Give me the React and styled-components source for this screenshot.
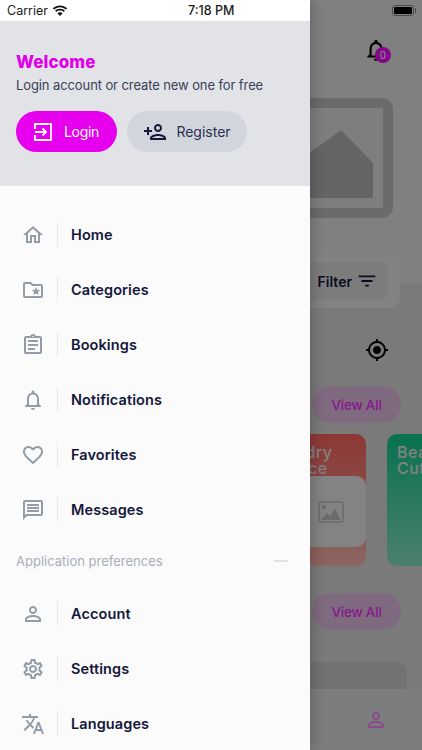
import React from "react";
import styled, { createGlobalStyle } from "styled-components";
import {
  MdOutlineHome, MdOutlineFolderSpecial, MdOutlineAssignment, MdOutlineNotifications,
  MdFavoriteBorder, MdOutlineMessage, MdPersonOutline, MdOutlineSettings, MdOutlineTranslate,
  MdPersonAddAlt, MdFilterList, MdMyLocation,
} from "react-icons/md";

const Global = createGlobalStyle`
  html, body { margin: 0; padding: 0; background: #fff; }
  * { box-sizing: border-box; }
  body { font-family: Inter, "Noto Sans", sans-serif; }
`;

const Phone = styled.div`
  position: relative; width: 422px; height: 750px; overflow: hidden; background: #dedede;
`;
const Screen = styled.div`
  width: 422px; height: 750px; display: flex; flex-direction: column; overflow: hidden;
`;
const HeroBlock = styled.div`
  height: 283px; flex: none; background: #e9e9e9; display: flex; flex-direction: column;
`;
const TopBar = styled.div`
  height: 21px; flex: none; display: flex; justify-content: flex-end; align-items: center; padding-right: 8px;
`;
const Battery = styled.div`
  position: relative; width: 22px; height: 11px; border: 1px solid #888; border-radius: 3px; padding: 1px; display: flex;
  &::before { content: ""; flex: 1; background: #000; border-radius: 1px; }
  &::after { content: ""; position: absolute; right: -3px; top: 2px; width: 1px; height: 5px; background: #888; }
`;
const Header = styled.div`
  height: 77px; flex: none; display: flex; justify-content: flex-end; padding: 16px 33px 0 0;
`;
const BellWrap = styled.div`
  position: relative; width: 26px; height: 26px; color: #000;
`;
const Badge = styled.span`
  position: absolute; left: 12px; top: 10px; width: 16px; height: 16px; border-radius: 50%;
  background: #f00eff; color: #fff; font-size: 10px; line-height: 16px; text-align: center;
`;
const Hero = styled.div`
  display: flex; justify-content: flex-end; padding-right: 29px;
`;
const FilterOuter = styled.div`
  position: relative; height: 53px; width: 392px; flex: none; margin: -28px 0 0 8px; background: #ededed; border-radius: 10px; padding: 7px 12px 8px;
  display: flex;
`;
const FilterInner = styled.div`
  flex: 1; border-radius: 8px; background: #e2e2e2; display: flex; justify-content: flex-end; align-items: center; padding-right: 10px; gap: 4px;
`;
const FilterText = styled.span`
  font-size: 14px; font-weight: 600; color: #14173a;
`;
const LocationRow = styled.div`
  height: 78px; flex: none; display: flex; justify-content: flex-end; align-items: flex-start; padding: 30px 33px 0 0; color: #000;
`;
const ViewRow = styled.div`
  height: 37px; flex: none; display: flex; justify-content: flex-end; padding-right: 21px;
`;
const ViewAll = styled.div`
  width: 89px; height: 37px; border-radius: 19px; background: #e7c1e8; color: #f22fff; font-size: 13.5px; font-weight: 500; letter-spacing: -.2px;
  display: flex; align-items: center; justify-content: center;
`;
const Cards = styled.div`
  height: 132px; flex: none; margin-top: 11px; display: flex; gap: 21px; padding-left: 256px; width: 700px;
`;
const Card = styled.div`
  position: relative; width: ${p => p.$w}px; height: 132px; border-radius: 10px; overflow: hidden; flex: none;
  background: linear-gradient(180deg, ${p => p.$from}, ${p => p.$to});
  padding: 10px; color: #ececec; font-size: 16px; font-weight: 500; line-height: 16px; letter-spacing: .5px;
`;
const CardThumb = styled.div`
  position: absolute; right: ${p => p.$right}px; top: ${p => p.$top}px; width: 100px; height: ${p => p.$h}px; border-radius: 10px; background: #eeeef0;
  display: flex; align-items: center; justify-content: flex-end; padding-right: 22px; color: #c4c4c4;
`;
const ListCard = styled.div`
  height: 27px; flex: none; margin: 32px 15px 0 60px; background: #d0d0d0; border-radius: 10px 10px 0 0;
`;
const ViewRowSpaced = styled(ViewRow)`
  margin-top: 27px;
`;
const TabBar = styled.div`
  flex: 1; background: #e4e4e4; display: flex; justify-content: flex-end; align-items: flex-start; padding: 19px 34px 0 0; color: #fb87ff;
`;

const Scrim = styled.div`
  position: absolute; inset: 0; background: rgba(0,0,0,.45);
`;

const Drawer = styled.aside`
  position: absolute; left: 0; top: 0; bottom: 0; width: 310px; background: #fbfbfc; overflow: hidden;
  box-shadow: 3px 0 12px rgba(0,0,0,.2); display: flex; flex-direction: column;
`;
const StatusBar = styled.div`
  height: 21px; flex: none; background: #fff; display: flex; align-items: center; padding-left: 7px;
  font-size: 12.5px; color: #1a1a1a;
`;
const Carrier = styled.span`
  display: inline-block; margin-right: 4px;
`;
const Clock = styled.span`
  margin-left: 120px; font-weight: 500; font-size: 12.5px;
`;
const Intro = styled.div`
  height: 165px; flex: none; background: #e1e3e7; padding: 31px 16px 0;
`;
const Welcome = styled.h1`
  margin: 0; font-size: 17px; line-height: 21px; font-weight: 800; color: #e000e8; letter-spacing: .1px;
`;
const Sub = styled.p`
  margin: 3px 0 0; font-size: 13px; line-height: 18px; color: #3b3f58; letter-spacing: -.1px;
`;
const Buttons = styled.div`
  display: flex; gap: 10px; margin-top: 17px;
`;
const Btn = styled.div`
  height: 41px; width: ${p => p.$w}px; border-radius: 21px; background: ${p => p.$bg}; color: ${p => p.$fg};
  display: flex; align-items: center; justify-content: center; gap: ${p => p.$gap}px; font-size: 14px;
  letter-spacing: ${p => p.$track}px;
`;
const RegisterIcon = styled(MdPersonAddAlt)`
  transform: scaleX(-1); color: #14173a;
`;
const Menu = styled.nav`
  display: flex; flex-direction: column; padding-top: 21px;
`;
const Row = styled.div`
  height: 55px; flex: none; display: flex; align-items: center; padding-left: 21px;
`;
const IconSlot = styled.span`
  width: 24px; height: 24px; display: flex; align-items: center; justify-content: center; color: #929da8; font-size: 24px;
`;
const Divider = styled.span`
  width: 1px; height: 25px; background: #e6e8eb; margin: 0 13px 0 12px;
`;
const Label = styled.span`
  font-size: 14.5px; font-weight: 600; color: #14173a; letter-spacing: .1px;
`;
const Section = styled.div`
  height: 50px; flex: none; display: flex; align-items: center; justify-content: space-between; padding: 0 22px 0 16px;
  font-size: 13px; color: #a9aeb8;
  margin-top: -1px;
`;
const Dash = styled.span`
  width: 14px; height: 2px; background: #dfe1e5;
`;

const Wifi = () => (
  <svg width="16" height="12" viewBox="0 0 16 12" fill="#111">
    <path d="M8 2.2c2.3 0 4.4.9 6 2.4l1.2-1.3C13.3 1.5 10.8.4 8 .4S2.7 1.5.8 3.3L2 4.6c1.6-1.5 3.7-2.4 6-2.4z" />
    <path d="M8 5.5c1.4 0 2.7.5 3.7 1.4l1.2-1.3C11.6 4.4 9.9 3.7 8 3.7s-3.6.7-4.9 1.9l1.2 1.3c1-.9 2.3-1.4 3.7-1.4z" />
    <path d="M8 7.2c-1 0-1.9.4-2.6 1L8 11l2.6-2.8c-.7-.6-1.6-1-2.6-1z" />
  </svg>
);
const LoginGlyph = () => (
  <svg width="18" height="18" viewBox="0 0 18 18" fill="none" stroke="#fff" strokeWidth="1.8">
    <path d="M1 6V1h16v16H1v-5" />
    <path d="M1 9h11M8.5 5.5L12 9l-3.5 3.5" />
  </svg>
);
const ThumbImage = () => (
  <svg width="26" height="22" viewBox="0 0 26 22">
    <rect x="1" y="1" width="24" height="20" rx="1.5" fill="none" stroke="currentColor" strokeWidth="1.6" />
    <circle cx="6" cy="6" r="2" fill="currentColor" />
    <path d="M3 19l6-7 3 3 5-7 6 11z" fill="currentColor" />
  </svg>
);
const HeroArt = () => (
  <svg width="104" height="120" viewBox="0 0 104 120">
    <rect x="5" y="5" width="94" height="110" rx="6" fill="#e6e6e6" stroke="#c4c4c4" strokeWidth="10" />
    <path d="M0 70 L52 32 L84 65 V100 H0 Z" fill="#b6b6b6" />
  </svg>
);

const main = [
  ["Home", MdOutlineHome], ["Categories", MdOutlineFolderSpecial], ["Bookings", MdOutlineAssignment],
  ["Notifications", MdOutlineNotifications], ["Favorites", MdFavoriteBorder], ["Messages", MdOutlineMessage],
];
const prefs = [["Account", MdPersonOutline], ["Settings", MdOutlineSettings], ["Languages", MdOutlineTranslate]];

const MenuRow = ({ label, Icon }) => (
  <Row>
    <IconSlot><Icon /></IconSlot>
    <Divider />
    <Label>{label}</Label>
  </Row>
);

export default function App() {
  return (
    <Phone>
      <Global />
      <Screen>
        <HeroBlock>
          <TopBar><Battery /></TopBar>
          <Header>
            <BellWrap>
              <MdOutlineNotifications size={26} />
              <Badge>0</Badge>
            </BellWrap>
          </Header>
          <Hero><HeroArt /></Hero>
        </HeroBlock>
        <FilterOuter>
          <FilterInner>
            <FilterText>Filter</FilterText>
            <MdFilterList size={22} color="#14173a" />
          </FilterInner>
        </FilterOuter>
        <LocationRow><MdMyLocation size={24} /></LocationRow>
        <ViewRow><ViewAll>View All</ViewAll></ViewRow>
        <Cards>
          <Card $w={110} $from="#ff665f" $to="#ffb8b0">
            Laundry<br />Service
            <CardThumb $right={0} $top={42} $h={71}><ThumbImage /></CardThumb>
          </Card>
          <Card $w={120} $from="#10d090" $to="#8ae8c4">
            Beauty<br />Cut
            <CardThumb $right={-66} $top={43} $h={68} />
          </Card>
        </Cards>
        <ViewRowSpaced><ViewAll>View All</ViewAll></ViewRowSpaced>
        <ListCard />
        <TabBar><MdPersonOutline size={24} /></TabBar>
      </Screen>
      <Scrim />
      <Drawer>
        <StatusBar>
          <Carrier>Carrier</Carrier>
          <Wifi />
          <Clock>7:18 PM</Clock>
        </StatusBar>
        <Intro>
          <Welcome>Welcome</Welcome>
          <Sub>Login account or create new one for free</Sub>
          <Buttons>
            <Btn $w={101} $bg="#e600ee" $fg="#fff" $gap={12} $track={-0.3}><LoginGlyph />Login</Btn>
            <Btn $w={120} $bg="#d2d5dc" $fg="#2c3050" $gap={9} $track={0}><RegisterIcon size={24} />Register</Btn>
          </Buttons>
        </Intro>
        <Menu>
          {main.map(([l, I]) => <MenuRow key={l} label={l} Icon={I} />)}
          <Section>Application preferences<Dash /></Section>
          {prefs.map(([l, I]) => <MenuRow key={l} label={l} Icon={I} />)}
        </Menu>
      </Drawer>
    </Phone>
  );
}
